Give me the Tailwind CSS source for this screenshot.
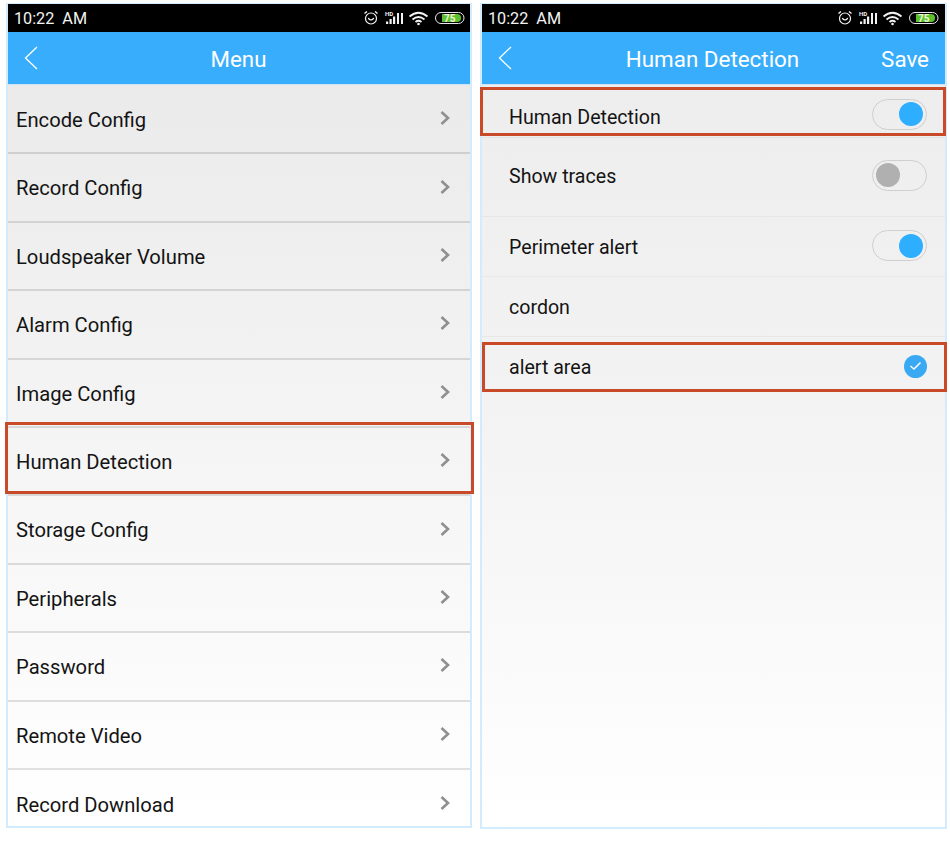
<!DOCTYPE html>
<html>
<head>
<meta charset="utf-8">
<script src="https://cdn.jsdelivr.net/npm/@tailwindcss/browser@4"></script>
</head>
<body class="bg-white font-['Roboto',sans-serif] text-[#141414]">
<div class="relative w-[950px] h-[841px] overflow-hidden flex gap-2 pl-[6px] pt-[3px]">

  <!-- LEFT PHONE -->
  <section class="relative w-[466px] h-[825px] border-2 border-t border-[#d3ecfd] flex flex-col overflow-hidden bg-gradient-to-b from-[#e8e8e8] via-[#f4f4f4] to-white">
    <div class="h-[28px] shrink-0 bg-black text-[#f2f2f2] flex items-center justify-between pl-[6px] pr-[4px]">
      <span class="text-[16.2px] whitespace-pre pt-[3px]">10:22  AM</span>
      <svg width="104" height="28" viewBox="0 0 104 28" fill="none">
        <g stroke="#f2f2f2" stroke-width="1.2"><circle cx="9" cy="14.500" r="5.500"/><path d="M6.500 14.500q2.500 2.800 5 0" stroke-linecap="round"/><path d="M2.500 9.500 5 7.500M15.500 9.500 13 7.500" stroke-width="1.500"/></g>
        <g fill="#f2f2f2"><rect x="24" y="17.500" width="2.200" height="2.500"/><rect x="27.500" y="15" width="2.200" height="5"/><rect x="31" y="12.500" width="2.200" height="7.500"/><rect x="35" y="9" width="2" height="11"/><rect x="39" y="9" width="2" height="11"/></g>
        <text x="23" y="12" font-size="6" font-weight="700" fill="#f2f2f2" font-family="Roboto">HD</text>
        <g stroke="#f2f2f2" stroke-width="1.700" fill="none"><path d="M47.500 12.500q9-7.500 18 0"/><path d="M50.500 15.500q6-5 12 0"/><path d="M53.500 18q3-2.500 6 0"/></g>
        <circle cx="56.500" cy="20" r="1.300" fill="#f2f2f2"/>
        <rect x="73.500" y="8.500" width="28.500" height="11" rx="5.500" stroke="#e8e8e8"/>
        <path d="M80 10h15q4 0 4 4t-4 4H80z" fill="#5cc22c"/>
        <text x="82" y="18" font-size="10" font-weight="700" fill="#f4f4d8" font-family="Roboto">75</text>
      </svg>
    </div>
    <header class="h-[53px] shrink-0 bg-[#38adfc] text-white relative flex items-center justify-center border-b border-[#cfe3f2]">
      <svg class="absolute left-[16px] top-[13px]" width="14" height="26" viewBox="0 0 14 26" fill="none"><path d="M13 2 1.500 13 13 24" stroke="#fff" stroke-width="1.300"/></svg>
      <h1 class="text-[22.3px] font-normal pr-[1px] pt-[3px]">Menu</h1>
    </header>
    <div class="flex flex-col text-[20.2px] leading-none mt-[1px]">
      <div class="h-[68.4px] shrink-0 flex items-center justify-between pl-2 pr-[19px] border-b-2 border-[#cfcfcf]"><span class="pt-[2px]">Encode Config</span><svg class="mb-[2px]" width="12" height="16" viewBox="0 0 12 16" fill="none"><path d="M2.500 2 9 8l-6.500 6" stroke="#8f8f8f" stroke-width="2.600"/></svg></div>
      <div class="h-[68.4px] shrink-0 flex items-center justify-between pl-2 pr-[19px] border-b-2 border-[#d2d2d2]"><span class="pt-[2px]">Record Config</span><svg class="mb-[2px]" width="12" height="16" viewBox="0 0 12 16" fill="none"><path d="M2.500 2 9 8l-6.500 6" stroke="#8f8f8f" stroke-width="2.600"/></svg></div>
      <div class="h-[68.4px] shrink-0 flex items-center justify-between pl-2 pr-[19px] border-b-2 border-[#d4d4d4]"><span class="pt-[2px]">Loudspeaker Volume</span><svg class="mb-[2px]" width="12" height="16" viewBox="0 0 12 16" fill="none"><path d="M2.500 2 9 8l-6.500 6" stroke="#8f8f8f" stroke-width="2.600"/></svg></div>
      <div class="h-[68.4px] shrink-0 flex items-center justify-between pl-2 pr-[19px] border-b-2 border-[#d6d6d6]"><span class="pt-[2px]">Alarm Config</span><svg class="mb-[2px]" width="12" height="16" viewBox="0 0 12 16" fill="none"><path d="M2.500 2 9 8l-6.500 6" stroke="#8f8f8f" stroke-width="2.600"/></svg></div>
      <div class="h-[68.4px] shrink-0 flex items-center justify-between pl-2 pr-[19px] border-b-2 border-[#d8d8d8]"><span class="pt-[2px]">Image Config</span><svg class="mb-[2px]" width="12" height="16" viewBox="0 0 12 16" fill="none"><path d="M2.500 2 9 8l-6.500 6" stroke="#8f8f8f" stroke-width="2.600"/></svg></div>
      <div class="h-[68.4px] shrink-0 flex items-center justify-between pl-2 pr-[19px] border-b-2 border-[#d8d8d8]"><span class="pt-[2px]">Human Detection</span><svg class="mb-[2px]" width="12" height="16" viewBox="0 0 12 16" fill="none"><path d="M2.500 2 9 8l-6.500 6" stroke="#8f8f8f" stroke-width="2.600"/></svg></div>
      <div class="h-[68.4px] shrink-0 flex items-center justify-between pl-2 pr-[19px] border-b-2 border-[#dadada]"><span class="pt-[2px]">Storage Config</span><svg class="mb-[2px]" width="12" height="16" viewBox="0 0 12 16" fill="none"><path d="M2.500 2 9 8l-6.500 6" stroke="#8f8f8f" stroke-width="2.600"/></svg></div>
      <div class="h-[68.4px] shrink-0 flex items-center justify-between pl-2 pr-[19px] border-b-2 border-[#dcdcdc]"><span class="pt-[2px]">Peripherals</span><svg class="mb-[2px]" width="12" height="16" viewBox="0 0 12 16" fill="none"><path d="M2.500 2 9 8l-6.500 6" stroke="#8f8f8f" stroke-width="2.600"/></svg></div>
      <div class="h-[68.4px] shrink-0 flex items-center justify-between pl-2 pr-[19px] border-b-2 border-[#dedede]"><span class="pt-[2px]">Password</span><svg class="mb-[2px]" width="12" height="16" viewBox="0 0 12 16" fill="none"><path d="M2.500 2 9 8l-6.500 6" stroke="#8f8f8f" stroke-width="2.600"/></svg></div>
      <div class="h-[68.4px] shrink-0 flex items-center justify-between pl-2 pr-[19px] border-b-2 border-[#e0e0e0]"><span class="pt-[2px]">Remote Video</span><svg class="mb-[2px]" width="12" height="16" viewBox="0 0 12 16" fill="none"><path d="M2.500 2 9 8l-6.500 6" stroke="#8f8f8f" stroke-width="2.600"/></svg></div>
      <div class="h-[68.4px] shrink-0 flex items-center justify-between pl-2 pr-[19px]"><span class="pt-[2px]">Record Download</span><svg class="mb-[2px]" width="12" height="16" viewBox="0 0 12 16" fill="none"><path d="M2.500 2 9 8l-6.500 6" stroke="#8f8f8f" stroke-width="2.600"/></svg></div>
    </div>
  </section>

  <!-- RIGHT PHONE -->
  <section class="relative w-[467px] h-[826px] border-2 border-t border-[#d3ecfd] flex flex-col overflow-hidden bg-gradient-to-b from-[#ececec] via-[#f3f3f3] to-white">
    <div class="h-[28px] shrink-0 bg-black text-[#f2f2f2] flex items-center justify-between pl-[6px] pr-[5px]">
      <span class="text-[16.2px] whitespace-pre pt-[3px]">10:22  AM</span>
      <svg width="104" height="28" viewBox="0 0 104 28" fill="none">
        <g stroke="#f2f2f2" stroke-width="1.2"><circle cx="9" cy="14.500" r="5.500"/><path d="M6.500 14.500q2.500 2.800 5 0" stroke-linecap="round"/><path d="M2.500 9.500 5 7.500M15.500 9.500 13 7.500" stroke-width="1.500"/></g>
        <g fill="#f2f2f2"><rect x="24" y="17.500" width="2.200" height="2.500"/><rect x="27.500" y="15" width="2.200" height="5"/><rect x="31" y="12.500" width="2.200" height="7.500"/><rect x="35" y="9" width="2" height="11"/><rect x="39" y="9" width="2" height="11"/></g>
        <text x="23" y="12" font-size="6" font-weight="700" fill="#f2f2f2" font-family="Roboto">HD</text>
        <g stroke="#f2f2f2" stroke-width="1.700" fill="none"><path d="M47.500 12.500q9-7.500 18 0"/><path d="M50.500 15.500q6-5 12 0"/><path d="M53.500 18q3-2.500 6 0"/></g>
        <circle cx="56.500" cy="20" r="1.300" fill="#f2f2f2"/>
        <rect x="73.500" y="8.500" width="28.500" height="11" rx="5.500" stroke="#e8e8e8"/>
        <path d="M80 10h15q4 0 4 4t-4 4H80z" fill="#5cc22c"/>
        <text x="82" y="18" font-size="10" font-weight="700" fill="#f4f4d8" font-family="Roboto">75</text>
      </svg>
    </div>
    <header class="h-[53px] shrink-0 bg-[#38adfc] text-white relative flex items-center justify-center border-b border-[#cfe3f2]">
      <svg class="absolute left-[16px] top-[13px]" width="14" height="26" viewBox="0 0 14 26" fill="none"><path d="M13 2 1.500 13 13 24" stroke="#fff" stroke-width="1.300"/></svg>
      <h1 class="text-[22.4px] font-normal pt-[3px] pr-[2px]">Human Detection</h1>
      <span class="absolute right-[16px] top-[11px] text-[22.4px]">Save</span>
    </header>
    <div class="flex flex-col text-[19.6px] leading-none">
      <div class="h-[53px] shrink-0 flex items-center justify-between pl-[27px] pr-[18px] pt-[12px] border-b border-[#e2e2e2]">
        <span class="pt-[2px]">Human Detection</span>
        <span class="w-[55px] h-[31px] rounded-full border border-[#cfcfcf] flex items-center justify-end pr-[3px] mt-[-6px]"><span class="w-[24px] h-[24px] rounded-full bg-[#2eaeff]"></span></span>
      </div>
      <div class="h-[79px] shrink-0 flex items-center justify-between pl-[27px] pr-[18px] pb-[2px] border-b border-[#e6e6e6]">
        <span class="pt-[2px]">Show traces</span>
        <span class="w-[55px] h-[31px] rounded-full border border-[#cfcfcf] flex items-center justify-start pl-[3px] mt-[-2px]"><span class="w-[24px] h-[24px] rounded-full bg-[#b0b0b0]"></span></span>
      </div>
      <div class="h-[60px] shrink-0 flex items-center justify-between pl-[27px] pr-[18px] border-b border-[#e8e8e8]">
        <span class="pt-[2px]">Perimeter alert</span>
        <span class="w-[55px] h-[31px] rounded-full border border-[#cfcfcf] flex items-center justify-end pr-[3px] mt-[-2px]"><span class="w-[24px] h-[24px] rounded-full bg-[#2eaeff]"></span></span>
      </div>
      <div class="h-[60px] shrink-0 flex items-center pl-[27px] pr-[18px] border-b border-[#e8e8e8]"><span class="pt-[2px]">cordon</span></div>
      <div class="h-[60px] shrink-0 flex items-center justify-between pl-[27px] pr-[18px]">
        <span class="pt-[2px]">alert area</span>
        <span class="w-[23px] h-[23px] mb-[2px] rounded-full bg-[#39a9f3] flex items-center justify-center"><svg width="13" height="10" viewBox="0 0 13 10" fill="none"><path d="M1.500 5 5 8l6.500-6.500" stroke="#fff" stroke-width="1.500"/></svg></span>
      </div>
    </div>
  </section>

  <!-- Red annotation boxes -->
  <div class="absolute left-[5px] top-[422px] w-[469px] h-[72px] border-[3px] border-[#c84a28]"></div>
  <div class="absolute left-[480px] top-[87px] w-[466px] h-[49px] border-[3px] border-[#c84a28]"></div>
  <div class="absolute left-[482px] top-[342px] w-[465px] h-[50px] border-[3px] border-[#c84a28]"></div>
</div>
</body>
</html>
